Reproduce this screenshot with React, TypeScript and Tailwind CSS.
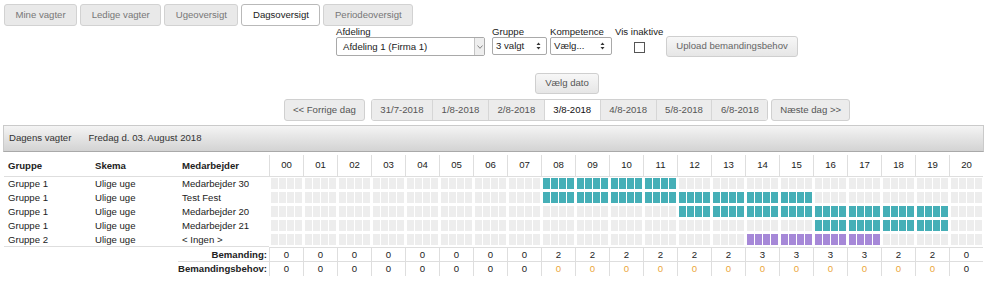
type Shift = { gruppe: string; skema: string; navn: string; from: number; to: number; kind: 'teal' | 'purple' }

const HOURS = Array.from({ length: 21 }, (_, i) => String(i).padStart(2, '0'))

const shifts: Shift[] = [
  { gruppe: 'Gruppe 1', skema: 'Ulige uge', navn: 'Medarbejder 30', from: 8, to: 12, kind: 'teal' },
  { gruppe: 'Gruppe 1', skema: 'Ulige uge', navn: 'Test Fest', from: 8, to: 16, kind: 'teal' },
  { gruppe: 'Gruppe 1', skema: 'Ulige uge', navn: 'Medarbejder 20', from: 12, to: 20, kind: 'teal' },
  { gruppe: 'Gruppe 1', skema: 'Ulige uge', navn: 'Medarbejder 21', from: 16, to: 20, kind: 'teal' },
  { gruppe: 'Gruppe 2', skema: 'Ulige uge', navn: '< Ingen >', from: 14, to: 18, kind: 'purple' },
]

const bemanding = HOURS.map((_, h) => shifts.filter((s) => h >= s.from && h < s.to).length)

const tabs = ['Mine vagter', 'Ledige vagter', 'Ugeoversigt', 'Dagsoversigt', 'Periodeoversigt']
const days = ['31/7-2018', '1/8-2018', '2/8-2018', '3/8-2018', '4/8-2018', '5/8-2018', '6/8-2018']

function UpDown() {
  return (
    <svg width="5" height="8" viewBox="0 0 5 8" className="shrink-0">
      <path d="M2.5 0.5 L4.5 3 L0.5 3 Z M2.5 7.5 L4.5 5 L0.5 5 Z" fill="#333" />
    </svg>
  )
}

function Blocks({ shift, hour }: { shift: Shift; hour: number }) {
  const on = hour >= shift.from && hour < shift.to
  const color = !on ? 'bg-[#ededed]' : shift.kind === 'teal' ? 'bg-[#45afb7]' : 'bg-[#a688d8]'
  return (
    <div className="flex gap-[1px] pl-[2px] pr-[1px] pt-[1px] h-[14px]">
      {[0, 1, 2, 3].map((q) => (
        <div key={q} className={'w-[7px] h-[11px] ' + color} />
      ))}
    </div>
  )
}

export default function App() {
  return (
    <div className="w-[987px] h-[285px] bg-white overflow-hidden font-['Liberation_Sans',Arial,sans-serif] text-[9.6px] text-[#222]">
      {/* faner */}
      <div className="flex gap-[3px] pl-[4px] pt-[4px]">
        {tabs.map((t) => (
          <div
            key={t}
            className={
              'h-[22px] px-[10.5px] flex items-center rounded-[3px] border ' +
              (t === 'Dagsoversigt'
                ? 'bg-white border-[#b9b9b9] text-[#222]'
                : 'bg-[#e9e9e9] border-[#d2d2d2] text-[#777]')
            }
          >
            {t}
          </div>
        ))}
      </div>

      {/* filtre */}
      <div className="flex items-start pl-[336px] mt-[1px] h-[36px]">
        <div className="flex flex-col w-[149px]">
          <span className="leading-[10px] h-[10px]">Afdeling</span>
          <div className="h-[19px] border border-[#a9a9a9] rounded-[2px] flex items-center bg-white">
            <span className="flex-1 pl-[6px] pt-[2px]">Afdeling 1 (Firma 1)</span>
            <div className="w-[10px] h-full border-l border-[#c4c4c4] bg-[#eeeeee] flex items-center justify-center">
              <svg width="6" height="4" viewBox="0 0 6 4">
                <path d="M0.5 0.5 L3 3.3 L5.5 0.5" fill="none" stroke="#777" strokeWidth="0.9" />
              </svg>
            </div>
          </div>
        </div>
        <div className="flex flex-col w-[55px] ml-[7px]">
          <span className="leading-[10px] h-[10px]">Gruppe</span>
          <div className="h-[18px] border border-[#a9a9a9] rounded-[2px] flex items-center justify-between pl-[3px] pr-[5px] bg-white">
            <span>3 valgt</span>
            <UpDown />
          </div>
        </div>
        <div className="flex flex-col w-[62px] ml-[3px]">
          <span className="leading-[10px] h-[10px]">Kompetence</span>
          <div className="h-[18px] border border-[#a9a9a9] rounded-[2px] flex items-center justify-between pl-[3px] pr-[6px] bg-white">
            <span>Vælg...</span>
            <UpDown />
          </div>
        </div>
        <div className="flex flex-col items-center ml-[3px]">
          <span className="leading-[10px] h-[10px]">Vis inaktive</span>
          <div className="w-[11px] h-[11px] border border-[#555] bg-white mt-[5px]" />
        </div>
        <button className="ml-[3px] mt-[9px] h-[21px] px-[9px] border border-[#cfcfcf] rounded-[3px] bg-linear-to-b from-[#f7f7f7] to-[#e6e6e6] text-[#666] text-[9.6px]">
          Upload bemandingsbehov
        </button>
      </div>

      {/* dato navigation */}
      <div className="pl-[147px] flex flex-col items-center mt-[10px]">
        <button className="h-[21px] px-[9px] border border-[#cfcfcf] rounded-[3px] bg-linear-to-b from-[#f7f7f7] to-[#e6e6e6] text-[#555] text-[9.6px]">
          Vælg dato
        </button>
        <div className="flex mt-[5px]">
          <button className="h-[22px] px-[8px] border border-[#d0d0d0] rounded-[3px] bg-[#ececec] text-[#555] text-[9.6px]">
            &lt;&lt; Forrige dag
          </button>
          <div className="flex ml-[6px] rounded-[3px] border border-[#d0d0d0] overflow-hidden">
            {days.map((d, i) => (
              <div
                key={d}
                className={
                  'h-[20px] px-[8.5px] flex items-center ' +
                  (i > 0 ? 'border-l border-[#d6d6d6] ' : '') +
                  (d === '3/8-2018' ? 'bg-white text-[#111]' : 'bg-[#ececec] text-[#555]')
                }
              >
                {d}
              </div>
            ))}
          </div>
          <button className="ml-[3px] h-[22px] px-[8px] border border-[#d0d0d0] rounded-[3px] bg-[#ececec] text-[#555] text-[9.6px]">
            Næste dag &gt;&gt;
          </button>
        </div>
      </div>

      {/* dagens vagter */}
      <div className="mt-[4px] mx-[3px] h-[27px] flex items-center gap-[17px] pl-[5px] border border-[#cacaca] border-b-[#a9a9a9] bg-linear-to-b from-[#f4f4f4] to-[#d3d3d3] text-[#333]">
        <span>Dagens vagter</span>
        <span>Fredag d. 03. August 2018</span>
      </div>

      {/* tabel */}
      <div className="mt-[3px] ml-[4px] grid grid-cols-[87px_87px_91px_repeat(21,34px)]">
        <div className="h-[22px] flex items-end pb-[3px] pl-[4px] font-bold border-b border-[#dedede]">Gruppe</div>
        <div className="h-[22px] flex items-end pb-[3px] pl-[4px] font-bold border-b border-[#dedede]">Skema</div>
        <div className="h-[22px] flex items-end pb-[3px] pl-[4px] font-bold border-b border-[#dedede]">Medarbejder</div>
        {HOURS.map((h) => (
          <div key={h} className="h-[22px] flex items-center justify-center border-l border-b border-[#dedede]">
            {h}
          </div>
        ))}

        {shifts.map((s, r) => (
          <div key={r} className="contents">
            <div className={'h-[14px] pl-[4px] leading-[14px] ' + (r === shifts.length - 1 ? 'border-b border-[#dedede]' : '')}>{s.gruppe}</div>
            <div className={'h-[14px] pl-[4px] leading-[14px] ' + (r === shifts.length - 1 ? 'border-b border-[#dedede]' : '')}>{s.skema}</div>
            <div className={'h-[14px] pl-[4px] leading-[14px] ' + (r === shifts.length - 1 ? 'border-b border-[#dedede]' : '')}>{s.navn}</div>
            {HOURS.map((_, hi) => (
              <div key={hi} className={r === shifts.length - 1 ? 'border-b border-[#dedede]' : ''}>
                <Blocks shift={s} hour={hi} />
              </div>
            ))}
          </div>
        ))}

        <div className="h-[14px]" />
        <div className="h-[14px]" />
        <div className="h-[14px] text-right pr-[2px] font-bold leading-[14px] border-b border-[#dedede]">Bemanding:</div>
        {bemanding.map((n, i) => (
          <div key={i} className="h-[14px] text-center leading-[14px] border-l border-b border-[#dedede]">
            {n}
          </div>
        ))}

        <div className="h-[14px]" />
        <div className="h-[14px]" />
        <div className="h-[14px] text-right pr-[2px] font-bold leading-[14px]">Bemandingsbehov:</div>
        {bemanding.map((n, i) => (
          <div
            key={i}
            className={'h-[14px] text-center leading-[14px] border-l border-[#dedede] ' + (n > 0 ? 'text-[#eba63a]' : 'text-[#222]')}
          >
            0
          </div>
        ))}
      </div>
    </div>
  )
}
